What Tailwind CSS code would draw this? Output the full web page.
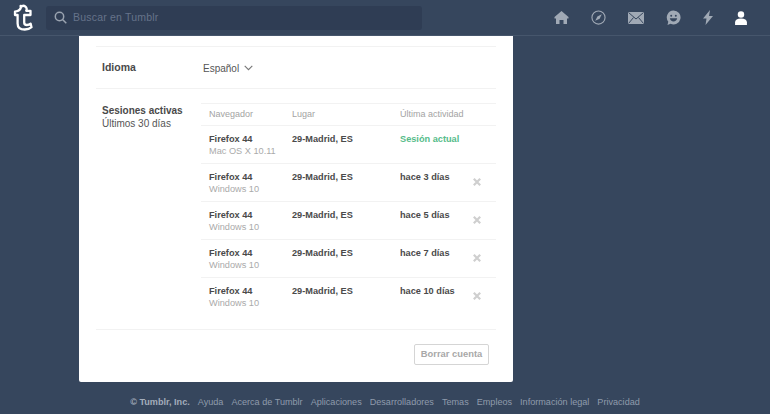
<!DOCTYPE html>
<html lang="es">
<head>
  <meta charset="UTF-8" />
  <title>Tumblr</title>
  <script src="https://cdn.jsdelivr.net/npm/@tailwindcss/browser@4"></script>
</head>
<body class="bg-[#36465d] h-[414px] w-[770px] overflow-hidden font-['Liberation_Sans',sans-serif] text-[#4a4a4a]">
  <header class="h-[36px] flex items-center border-b border-[#46566c]">
    <svg class="ml-[13px] w-[21px] h-[27px]" viewBox="0 0 21 27">
      <path d="M8 2C8 5 5.500 7.200 2 7.600v3.400h2.600v8.400c0 4 3 6.100 7.200 6.100 2.800 0 5.200-.9 6.700-2.300l-.9-3.600c-1.100.9-2.400 1.400-3.700 1.400-1.800 0-2.700-1-2.700-2.600V11h6.300V6.800h-4.300c.9-1.200.5-3.400-.9-4.300-1.300-.9-3.200-.7-4.300.6-.2.300-.4-.7-.4-1.100z" fill="none" stroke="#fff" stroke-width="2.300" stroke-linejoin="round" />
    </svg>
    <div class="ml-[12px] w-[376px] h-[24px] rounded-[3px] bg-[#2f3d54] flex items-center">
      <svg class="ml-[8px] w-[13px] h-[13px]" viewBox="0 0 13 13" fill="none" stroke="#9aa3b0" stroke-width="1.500">
        <circle cx="5.500" cy="5.500" r="4.200" />
        <path d="M8.500 8.500l3.800 3.800" />
      </svg>
      <span class="ml-[6px] text-[10.500px] text-[#66738a] tracking-[0.2px]">Buscar en Tumblr</span>
    </div>
    <nav class="ml-[132px] flex items-center gap-[22px]">
      <svg class="w-[15px] h-[15px]" viewBox="0 0 15 15"><path d="M7.500 1L0.500 7v1.500H2V14h3.500v-4h4v4H13V8.500h1.500V7z" fill="#a0a9b5" /></svg>
      <svg class="w-[15px] h-[15px]" viewBox="0 0 16 16" fill="none"><circle cx="8" cy="8" r="7" stroke="#a0a9b5" stroke-width="1.200" /><path d="M11.500 4.500L9.200 9.200 4.500 11.500 6.800 6.800z" fill="#a0a9b5" /></svg>
      <svg class="w-[16px] h-[12px]" viewBox="0 0 16 12"><path d="M0 0h16v12H0z" fill="#a0a9b5" /><path d="M0.500 0.500L8 7l7.500-6.500M0.500 11.500L5.500 5.500M15.500 11.500L10.500 5.500" fill="none" stroke="#36465d" stroke-width="1" /></svg>
      <svg class="w-[15px] h-[16px]" viewBox="0 0 15 16"><path d="M7.500 0.500a7 7 0 1 1-3 13.300L1.500 15l.8-3.200A7 7 0 0 1 7.500 0.500z" fill="#a0a9b5" /><circle cx="5.200" cy="5.800" r="1" fill="#36465d" /><circle cx="9.800" cy="5.800" r="1" fill="#36465d" /><path d="M3.800 8.200h7.400c-.3 2-1.800 3.200-3.700 3.200S4.100 10.200 3.800 8.200z" fill="#36465d" /></svg>
      <svg class="w-[10px] h-[15px]" viewBox="0 0 10 15"><path d="M7 0L0 8.500h3.500L2.500 15 10 6H6z" fill="#a0a9b5" /></svg>
      <svg class="w-[12px] h-[14px]" viewBox="0 0 11 13"><circle cx="5.500" cy="3.200" r="3" fill="#fff" /><path d="M0 13v-2.500C0 8.300 2 7 5.500 7S11 8.300 11 10.500V13z" fill="#fff" /></svg>
    </nav>
  </header>

  <main class="ml-[79px] w-[434px] h-[346px] bg-white rounded-b-[2px] px-[17px] pt-[10px]">
    <div class="border-t border-[#f2f2f2] border-b h-[43px] flex items-center px-[6px] pt-[1px]">
      <h3 class="w-[101px] text-[10.500px] font-bold">Idioma</h3>
      <span class="text-[10px] text-[#555]">Español</span>
      <svg class="ml-[5px] w-[9px] h-[6px]" viewBox="0 0 9 6" fill="none" stroke="#777" stroke-width="1.100"><path d="M0.700 0.800L4.500 4.600 8.300 0.800" /></svg>
    </div>

    <section class="flex h-[241px] border-b border-[#f2f2f2] pt-[14px] px-[6px]">
      <div class="w-[99px] pt-[1px] text-[10px] leading-[13px]">
        <h3 class="font-bold">Sesiones activas</h3>
        <p class="text-[#555]">Últimos 30 días</p>
      </div>
      <div class="w-[295px] -mr-[6px]">
        <div class="flex h-[23px] items-center pl-[8px] text-[9px] text-[#a3a3a3] border-y border-[#f2f2f2]">
          <span class="w-[83px]">Navegador</span>
          <span class="w-[108px]">Lugar</span>
          <span>Última actividad</span>
        </div>
        <div class="relative h-[38px] border-b border-[#f2f2f2] pl-[8px] pt-[7px] flex text-[9.200px] leading-[12px]">
          <div class="w-[83px]"><p class="font-bold">Firefox 44</p><p class="text-[#aaa]">Mac OS X 10.11</p></div>
          <p class="w-[108px] font-bold">29-Madrid, ES</p>
          <p class="font-bold text-[#56bc8a]">Sesión actual</p>
        </div>
        <div class="relative h-[38px] border-b border-[#f2f2f2] pl-[8px] pt-[7px] flex text-[9.200px] leading-[12px]">
          <div class="w-[83px]"><p class="font-bold">Firefox 44</p><p class="text-[#aaa]">Windows 10</p></div>
          <p class="w-[108px] font-bold">29-Madrid, ES</p>
          <p class="font-bold">hace 3 días</p>
          <svg class="absolute right-[15px] top-[14px] w-[8px] h-[8px]" viewBox="0 0 8 8" stroke="#cfcfcf" stroke-width="2.200"><path d="M0.800 0.800l6.400 6.400M7.200 0.800L0.800 7.200" /></svg>
        </div>
        <div class="relative h-[38px] border-b border-[#f2f2f2] pl-[8px] pt-[7px] flex text-[9.200px] leading-[12px]">
          <div class="w-[83px]"><p class="font-bold">Firefox 44</p><p class="text-[#aaa]">Windows 10</p></div>
          <p class="w-[108px] font-bold">29-Madrid, ES</p>
          <p class="font-bold">hace 5 días</p>
          <svg class="absolute right-[15px] top-[14px] w-[8px] h-[8px]" viewBox="0 0 8 8" stroke="#cfcfcf" stroke-width="2.200"><path d="M0.800 0.800l6.400 6.400M7.200 0.800L0.800 7.200" /></svg>
        </div>
        <div class="relative h-[38px] border-b border-[#f2f2f2] pl-[8px] pt-[7px] flex text-[9.200px] leading-[12px]">
          <div class="w-[83px]"><p class="font-bold">Firefox 44</p><p class="text-[#aaa]">Windows 10</p></div>
          <p class="w-[108px] font-bold">29-Madrid, ES</p>
          <p class="font-bold">hace 7 días</p>
          <svg class="absolute right-[15px] top-[14px] w-[8px] h-[8px]" viewBox="0 0 8 8" stroke="#cfcfcf" stroke-width="2.200"><path d="M0.800 0.800l6.400 6.400M7.200 0.800L0.800 7.200" /></svg>
        </div>
        <div class="relative h-[38px] pl-[8px] pt-[7px] flex text-[9.200px] leading-[12px]">
          <div class="w-[83px]"><p class="font-bold">Firefox 44</p><p class="text-[#aaa]">Windows 10</p></div>
          <p class="w-[108px] font-bold">29-Madrid, ES</p>
          <p class="font-bold">hace 10 días</p>
          <svg class="absolute right-[15px] top-[14px] w-[8px] h-[8px]" viewBox="0 0 8 8" stroke="#cfcfcf" stroke-width="2.200"><path d="M0.800 0.800l6.400 6.400M7.200 0.800L0.800 7.200" /></svg>
        </div>
      </div>
    </section>

    <div class="flex justify-end pt-[14px] pr-[7px]">
      <button class="w-[75px] h-[21px] border border-[#d5d5d5] rounded-[2px] text-[9.400px] font-bold text-[#a8a8a8]">Borrar cuenta</button>
    </div>
  </main>

  <footer class="mt-[15px] flex justify-center gap-[8px] text-[9.100px] leading-[11px] text-[#8f9bac]">
    <span class="font-bold text-[#a3adbb]">© Tumblr, Inc.</span>
    <a>Ayuda</a><a>Acerca de Tumblr</a><a>Aplicaciones</a><a>Desarrolladores</a><a>Temas</a><a>Empleos</a><a>Información legal</a><a>Privacidad</a>
  </footer>
</body>
</html>
